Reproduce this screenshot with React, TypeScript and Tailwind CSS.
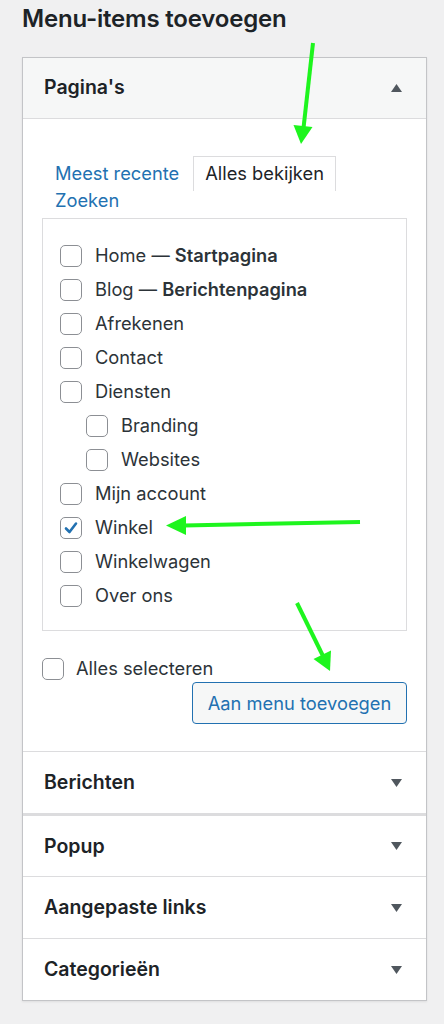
import React from 'react'

type Page = { label: string; suffix?: string; nested?: boolean; checked?: boolean }

const pages: Page[] = [
  { label: 'Home', suffix: 'Startpagina' },
  { label: 'Blog', suffix: 'Berichtenpagina' },
  { label: 'Afrekenen' },
  { label: 'Contact' },
  { label: 'Diensten' },
  { label: 'Branding', nested: true },
  { label: 'Websites', nested: true },
  { label: 'Mijn account' },
  { label: 'Winkel', checked: true },
  { label: 'Winkelwagen' },
  { label: 'Over ons' },
]

const sections = ['Berichten', 'Popup', 'Aangepaste links', 'Categorieën']

function Checkbox({ checked }: { checked?: boolean }) {
  return (
    <span className="flex h-[22px] w-[22px] shrink-0 items-center justify-center rounded-[5px] border border-[#8c8f94] bg-white">
      {checked && (
        <svg width="16" height="16" viewBox="0 0 16 16">
          <path d="M3 8.5 L6.5 12 L13 3.5" fill="none" stroke="#2271b1" strokeWidth="2.6" strokeLinecap="round" strokeLinejoin="round" />
        </svg>
      )}
    </span>
  )
}

function Caret({ up }: { up?: boolean }) {
  return (
    <svg width="11" height="8" viewBox="0 0 11 8" className="mr-[24px]">
      {up ? <polygon points="0,8 11,8 5.5,0" fill="#50575e" /> : <polygon points="0,0 11,0 5.5,8" fill="#50575e" />}
    </svg>
  )
}

function Arrows() {
  return (
    <svg className="pointer-events-none absolute left-0 top-0" width="444" height="1024" viewBox="0 0 444 1024">
      <g stroke="#1ef51e" strokeWidth="4" strokeLinecap="butt">
        <line x1="313" y1="43" x2="303.5" y2="128" />
        <line x1="360" y1="522" x2="184" y2="525.5" />
        <line x1="297" y1="603" x2="323" y2="656" />
      </g>
      <g fill="#1ef51e">
        <polygon points="293.5,125 312.5,127 301,144" />
        <polygon points="186,516 186,535 166,525.5" />
        <polygon points="313.5,659 331,650.5 330,671" />
      </g>
    </svg>
  )
}

export default function App() {
  return (
    <div className="relative h-[1024px] w-[444px] overflow-hidden bg-[#f0f0f1] font-['Inter',sans-serif] text-[#1d2327]">
      <h1 className="px-[22px] pt-[3px] text-[24px] font-semibold leading-[32px] tracking-[-0.2px]">Menu-items toevoegen</h1>

      <div className="mx-[22px] mt-[22px] w-[405px] border border-[#c3c4c7] bg-white shadow-[0_1px_2px_rgba(0,0,0,0.08)]">
        <div className="flex h-[61px] items-center justify-between border-b border-[#dcdcde] bg-[#f6f7f7] pl-[21px]">
          <span className="text-[19.5px] font-semibold">Pagina's</span>
          <Caret up />
        </div>

        <div className="px-[19px] pb-[27px] pt-[37px]">
          <div className="flex flex-wrap items-start pl-[13px] text-[18.3px] leading-[24px]">
            <span className="pt-[5px] text-[#2271b1]">Meest recente</span>
            <span className="ml-[14px] border border-b-0 border-[#dcdcde] px-[11px] pb-[6px] pt-[4px]">Alles bekijken</span>
            <span className="-mt-[3px] w-full text-[#2271b1]">Zoeken</span>
          </div>

          <div className="mt-[6px] border border-[#dcdcde] pb-[17px] pl-[17px] pt-[20px]">
            {pages.map((p) => (
              <label key={p.label} className={`flex h-[34px] items-center gap-[13px] text-[18.3px] text-[#2c3338] ${p.nested ? 'pl-[26px]' : ''}`}>
                <Checkbox checked={p.checked} />
                <span>
                  {p.label}
                  {p.suffix && (
                    <>
                      {' — '}
                      <b className="font-semibold">{p.suffix}</b>
                    </>
                  )}
                </span>
              </label>
            ))}
          </div>

          <label className="mt-[24px] flex items-center gap-[12px] text-[18.3px] text-[#2c3338]">
            <Checkbox />
            <span>Alles selecteren</span>
          </label>

          <div className="flex justify-end">
            <button className="h-[42px] w-[215px] rounded-[4px] border border-[#2271b1] bg-[#f6f7f7] text-[18.3px] text-[#2271b1]">
              Aan menu toevoegen
            </button>
          </div>
        </div>

        {sections.map((s, i) => (
          <div
            key={s}
            className={`flex items-center justify-between border-t pl-[21px] ${i === 1 ? 'h-[63px] border-t-[3px] border-[#dcdcde]' : 'h-[62px] border-[#dcdcde]'}`}
          >
            <span className="text-[19.5px] font-semibold">{s}</span>
            <Caret />
          </div>
        ))}
      </div>

      <Arrows />
    </div>
  )
}
